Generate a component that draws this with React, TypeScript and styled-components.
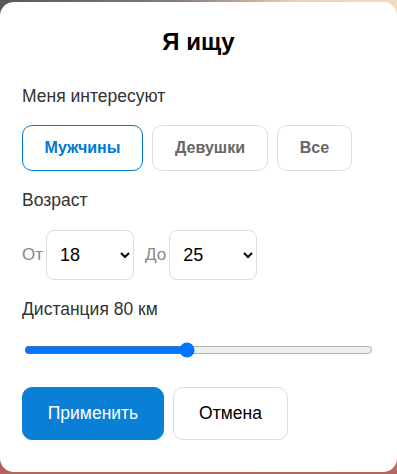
import { useState } from 'react';
import styled, { createGlobalStyle } from 'styled-components';

const GlobalStyle = createGlobalStyle`
  html, body {
    margin: 0;
    padding: 0;
    height: 100%;
  }
  body {
    font-family: 'Liberation Sans', Arial, sans-serif;
    background: linear-gradient(90deg, #5b5758 0%, #8a7c7a 45%, #e9d2b8 75%, #f4dcc0 100%);
    overflow: hidden;
  }
  #root {
    height: 100%;
  }
`;

const Backdrop = styled.div`
  height: 100%;
  padding-top: 2px;
  box-sizing: border-box;
  background: linear-gradient(180deg, rgba(0, 0, 0, 0) 0%, rgba(0, 0, 0, 0) 80%, #b4645a 100%);
`;

const Modal = styled.div`
  background: #fff;
  border-radius: 14px;
  height: 470px;
  box-sizing: border-box;
  padding: 26px 22px 0;
`;

const Title = styled.h2`
  margin: 0 0 31px;
  text-align: center;
  font-size: 24px;
  font-weight: 700;
  color: #000;
  line-height: 27px;
`;

const Label = styled.div`
  font-size: 17.5px;
  color: #333;
  line-height: 20px;
`;

const ChoiceRow = styled.div`
  display: flex;
  gap: 9px;
  margin: 19px 0 19px;
`;

const Choice = styled.button<{ $active?: boolean; $w: number }>`
  width: ${(p) => p.$w}px;
  height: 46px;
  border-radius: 10px;
  background: #fff;
  border: 1px solid ${(p) => (p.$active ? '#0078d4' : '#dcdcdc')};
  color: ${(p) => (p.$active ? '#0078d4' : '#666')};
  font-family: inherit;
  font-size: 16px;
  font-weight: 700;
  cursor: pointer;
  padding: 0;
`;

const AgeRow = styled.div`
  display: flex;
  align-items: center;
  margin: 20px 0 19px;
`;

const AgeCaption = styled.span`
  font-size: 17px;
  color: #888;
  margin-right: 3px;
`;

const Select = styled.select<{ $gap?: number }>`
  width: 88px;
  height: 50px;
  border: 1px solid #dcdcdc;
  border-radius: 8px;
  background: #fff;
  font-family: inherit;
  font-size: 18px;
  color: #000;
  padding: 0 8px 0 9px;
  margin-right: ${(p) => p.$gap ?? 0}px;
`;

const Range = styled.input`
  display: block;
  width: calc(100% - 4px);
  margin: 22px 0 0 2px;
  height: 18px;
`;

const Actions = styled.div`
  display: flex;
  gap: 9px;
  margin-top: 28px;
`;

const Button = styled.button<{ $primary?: boolean; $w: number }>`
  width: ${(p) => p.$w}px;
  height: 53px;
  border-radius: 10px;
  font-family: inherit;
  font-size: 17.5px;
  cursor: pointer;
  border: 1px solid ${(p) => (p.$primary ? '#0a7fd6' : '#dcdcdc')};
  background: ${(p) => (p.$primary ? '#0a7fd6' : '#fff')};
  color: ${(p) => (p.$primary ? '#fff' : '#000')};
`;

const options = ['Мужчины', 'Девушки', 'Все'];
const widths = [121, 116, 75];

export default function App() {
  const [gender, setGender] = useState('Мужчины');
  const [from, setFrom] = useState('18');
  const [to, setTo] = useState('25');
  const [distance, setDistance] = useState(80);

  const ages = Array.from({ length: 83 }, (_, i) => String(i + 18));

  return (
    <Backdrop>
      <GlobalStyle />
      <Modal>
        <Title>Я ищу</Title>
        <Label>Меня интересуют</Label>
        <ChoiceRow>
          {options.map((o, i) => (
            <Choice key={o} $w={widths[i]} $active={gender === o} onClick={() => setGender(o)}>
              {o}
            </Choice>
          ))}
        </ChoiceRow>
        <Label>Возраст</Label>
        <AgeRow>
          <AgeCaption>От</AgeCaption>
          <Select $gap={11} value={from} onChange={(e) => setFrom(e.target.value)}>
            {ages.map((a) => (
              <option key={a}>{a}</option>
            ))}
          </Select>
          <AgeCaption>До</AgeCaption>
          <Select value={to} onChange={(e) => setTo(e.target.value)}>
            {ages.map((a) => (
              <option key={a}>{a}</option>
            ))}
          </Select>
        </AgeRow>
        <Label>Дистанция {distance} км</Label>
        <Range
          type="range"
          min={10}
          max={160}
          value={distance}
          onChange={(e) => setDistance(Number(e.target.value))}
        />
        <Actions>
          <Button $primary $w={142}>Применить</Button>
          <Button $w={115}>Отмена</Button>
        </Actions>
      </Modal>
    </Backdrop>
  );
}
